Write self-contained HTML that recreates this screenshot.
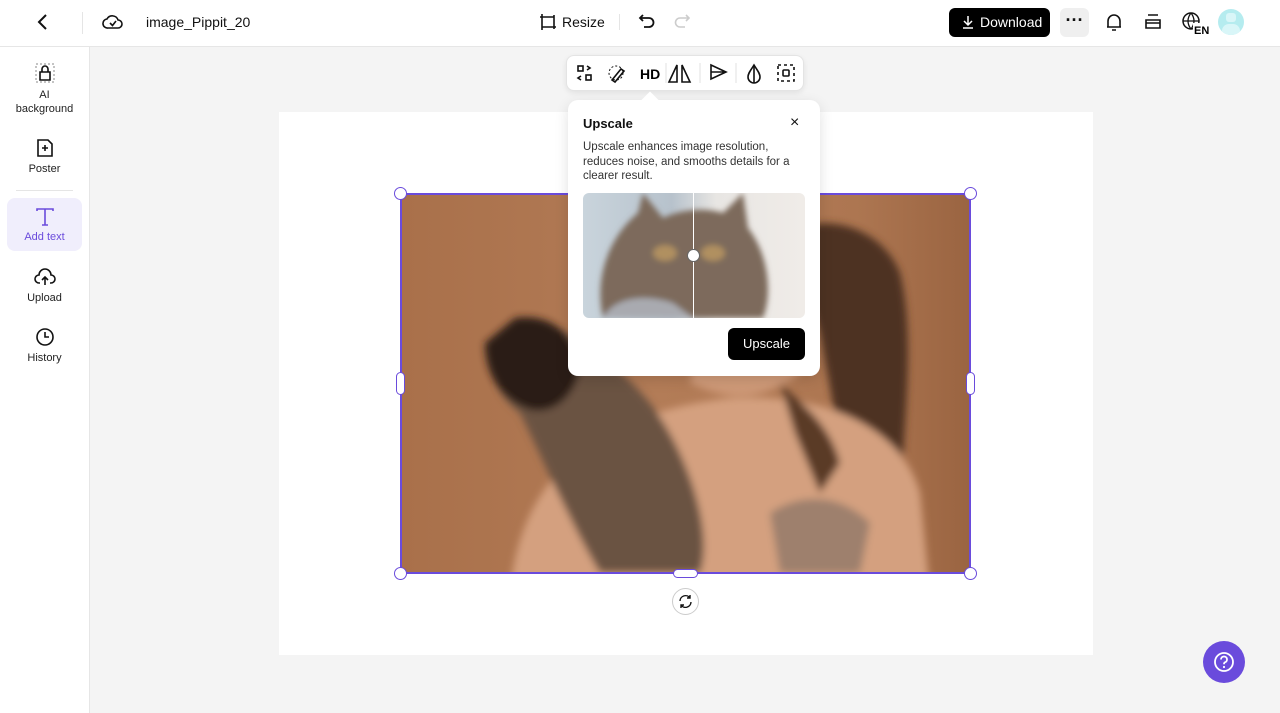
<html><head><style>
*{margin:0;padding:0;box-sizing:border-box}
body{width:1280px;height:713px;overflow:hidden;background:#f4f4f4;font-family:"Liberation Sans",sans-serif;position:relative;color:#111}
.top{position:absolute;left:0;top:0;width:1280px;height:47px;background:#fff;border-bottom:1px solid #e6e6e6}
.side{position:absolute;left:0;top:47px;width:90px;height:666px;background:#fff;border-right:1px solid #e6e6e6}
.it{position:absolute;left:7px;width:75px;text-align:center;font-size:11px;color:#222}
.ab{position:absolute}
svg{position:absolute}
</style></head><body>
<div class="top">
<svg style="left:35px;top:13px" width="16" height="18" viewBox="0 0 16 18"><path d="M11 2L4 9l7 7" fill="none" stroke="#111" stroke-width="2"/></svg>
<div class="ab" style="left:82px;top:12px;width:1px;height:22px;background:#e5e5e5"></div>
<svg style="left:102px;top:12px" width="22" height="20" viewBox="0 0 22 20"><path d="M6 16h10a4 4 0 0 0 0-8 6 6 0 0 0-11-1 4.5 4.5 0 0 0 1 9z" fill="none" stroke="#111" stroke-width="1.6"/><path d="M8 11l2.5 2.5L14 9" fill="none" stroke="#111" stroke-width="1.6"/></svg>
<div class="ab" style="left:146px;top:14px;font-size:14px">image_Pippit_20</div>
<svg style="left:539px;top:13px" width="18" height="18" viewBox="0 0 18 18"><path d="M3 1v16M1 4h14M15 2v14M3 14h14" fill="none" stroke="#111" stroke-width="1.6"/></svg>
<div class="ab" style="left:562px;top:14px;font-size:14px">Resize</div>
<div class="ab" style="left:619px;top:14px;width:1px;height:16px;background:#e5e5e5"></div>
<svg style="left:638px;top:13px" width="18" height="18" viewBox="0 0 18 18"><path d="M5 2L2 5l3 3M2 5h9a4.5 4.5 0 0 1 0 9H6" fill="none" stroke="#111" stroke-width="1.8"/></svg>
<svg style="left:673px;top:13px" width="18" height="18" viewBox="0 0 18 18"><path d="M13 2l3 3-3 3M16 5H7a4.5 4.5 0 0 0 0 9h5" fill="none" stroke="#ccc" stroke-width="1.6"/></svg>
<div class="ab" style="left:949px;top:8px;width:101px;height:29px;background:#000;border-radius:6px;color:#fff;font-size:14px;line-height:29px;padding-left:31px">Download</div>
<svg style="left:961px;top:15px" width="14" height="14" viewBox="0 0 14 14"><path d="M7 1v9M3 6l4 4 4-4M2 13h10" fill="none" stroke="#fff" stroke-width="1.5"/></svg>
<div class="ab" style="left:1060px;top:8px;width:29px;height:29px;background:#efefef;border-radius:6px;text-align:center;font-size:18px;line-height:24px;font-weight:bold">···</div>
<svg style="left:1104px;top:12px" width="20" height="20" viewBox="0 0 20 20"><path d="M4 15V9a6 6 0 0 1 12 0v6H3h14M8 18h4" fill="none" stroke="#111" stroke-width="1.6"/></svg>
<svg style="left:1143px;top:13px" width="20" height="18" viewBox="0 0 20 18"><path d="M5 2h10M3 7h14v8H3zM3 10h14" fill="none" stroke="#111" stroke-width="1.6"/></svg>
<svg style="left:1181px;top:11px" width="28" height="24" viewBox="0 0 28 24"><circle cx="10" cy="10" r="8" fill="none" stroke="#111" stroke-width="1.5"/><path d="M2 10h16M10 2c-4 5-4 11 0 16M10 2c4 5 4 11 0 16" fill="none" stroke="#111" stroke-width="1.3"/><rect x="12" y="12" width="16" height="12" fill="#fff"/><text x="13" y="23" font-size="11" font-family="Liberation Sans" font-weight="bold">EN</text></svg>
<div class="ab" style="left:1218px;top:9px;width:26px;height:26px;border-radius:50%;background:#b5ecef;overflow:hidden"><div class="ab" style="left:8px;top:4px;width:10px;height:9px;border-radius:3px;background:#d9f6f8"></div><div class="ab" style="left:4px;top:15px;width:18px;height:14px;border-radius:8px;background:#d9f6f8"></div></div>
</div>
<div class="side">
<svg style="left:35px;top:16px" width="20" height="20" viewBox="0 0 20 20"><rect x="1" y="1" width="18" height="18" fill="none" stroke="#888" stroke-width="1" stroke-dasharray="2 2"/><path d="M5 17V9h10v8zM7 9V6a3 3 0 0 1 6 0v3" fill="none" stroke="#111" stroke-width="1.6"/></svg>
<div class="it" style="top:41px;line-height:14px">AI<br>background</div>
<svg style="left:35px;top:91px" width="20" height="20" viewBox="0 0 20 20"><path d="M3 2h10l4 4v12H3z" fill="none" stroke="#111" stroke-width="1.6"/><path d="M10 7v6M7 10h6" stroke="#111" stroke-width="1.6"/></svg>
<div class="it" style="top:116px">Poster</div>
<div class="ab" style="left:16px;top:143px;width:57px;height:1px;background:#e5e5e5"></div>
<div class="ab" style="left:7px;top:151px;width:75px;height:53px;background:#f0eefc;border-radius:8px"></div>
<svg style="left:35px;top:160px" width="20" height="20" viewBox="0 0 20 20"><path d="M2 4V2h16v2M10 2v16M7 18h6" fill="none" stroke="#6a4bdc" stroke-width="1.6"/></svg>
<div class="it" style="top:184px;color:#6a4bdc">Add text</div>
<svg style="left:34px;top:220px" width="22" height="20" viewBox="0 0 22 20"><path d="M6 16H5a4 4 0 0 1 0-8 6 6 0 0 1 12 0 4 4 0 0 1 0 8h-1M11 18v-8M8 13l3-3 3 3" fill="none" stroke="#111" stroke-width="1.6"/></svg>
<div class="it" style="top:245px">Upload</div>
<svg style="left:35px;top:280px" width="20" height="20" viewBox="0 0 20 20"><circle cx="10" cy="10" r="8" fill="none" stroke="#111" stroke-width="1.6"/><path d="M10 5v5h4" fill="none" stroke="#111" stroke-width="1.6"/></svg>
<div class="it" style="top:305px">History</div>
</div>
<div class="ab" style="left:279px;top:112px;width:814px;height:543px;background:#fff"></div>
<div class="ab" style="left:400px;top:193px;width:571px;height:380px;overflow:hidden;background:linear-gradient(90deg,#a9704a 0%,#b37c57 45%,#ad7651 80%,#9a6441 100%)">
<svg style="left:0;top:0" width="571" height="380" viewBox="0 0 571 380"><defs><filter id="b"><feGaussianBlur stdDeviation="4"/></filter></defs><g filter="url(#b)">
<path d="M390 40 C420 20 480 30 500 80 C515 140 505 220 500 310 L470 330 L440 250 L420 140 Z" fill="#4e3022"/>
<path d="M110 400 C120 280 200 220 330 205 C420 200 500 230 520 300 L530 400 Z" fill="#d4a07f"/>
<path d="M290 190 C330 210 370 205 400 180 L400 130 L300 130 Z" fill="#cf9a78"/>
<path d="M380 190 C400 210 430 230 440 270 L420 300 L395 240 Z" fill="#5a3a28"/>
<path d="M95 150 C120 120 165 125 185 160 C210 165 250 200 275 250 C300 300 310 350 300 380 L200 380 C170 330 140 260 120 220 C95 200 85 175 95 150Z" fill="#6a5242"/>
<path d="M85 150 L115 125 C150 120 175 140 180 175 C175 205 150 225 125 215 C100 205 85 180 85 150Z" fill="#2a1d17"/>
<path d="M370 320 C400 300 440 300 470 330 L460 380 L380 380Z" fill="#7a6a60" opacity=".6"/>
</g></svg>
</div>
<div class="ab" style="left:400px;top:193px;width:571px;height:381px;border:2px solid #6a4bdc"></div>
<div class="ab" style="left:394px;top:187px;width:13px;height:13px;border-radius:50%;background:#fff;border:1.5px solid #6a4bdc"></div>
<div class="ab" style="left:964px;top:187px;width:13px;height:13px;border-radius:50%;background:#fff;border:1.5px solid #6a4bdc"></div>
<div class="ab" style="left:394px;top:567px;width:13px;height:13px;border-radius:50%;background:#fff;border:1.5px solid #6a4bdc"></div>
<div class="ab" style="left:964px;top:567px;width:13px;height:13px;border-radius:50%;background:#fff;border:1.5px solid #6a4bdc"></div>
<div class="ab" style="left:396px;top:372px;width:9px;height:23px;border-radius:5px;background:#fff;border:1.5px solid #6a4bdc"></div>
<div class="ab" style="left:966px;top:372px;width:9px;height:23px;border-radius:5px;background:#fff;border:1.5px solid #6a4bdc"></div>
<div class="ab" style="left:673px;top:569px;width:25px;height:9px;border-radius:5px;background:#fff;border:1.5px solid #6a4bdc"></div>
<div class="ab" style="left:672px;top:588px;width:27px;height:27px;border-radius:50%;background:#fff;border:1px solid #ccc"></div>
<svg style="left:677px;top:593px" width="17" height="17" viewBox="0 0 17 17"><path d="M3 8a5.5 5.5 0 0 1 10-3M14 9a5.5 5.5 0 0 1-10 3M13 2v3h-3M4 15v-3h3" fill="none" stroke="#111" stroke-width="1.4"/></svg>
<div class="ab" style="left:566px;top:55px;width:238px;height:36px;background:#fff;border:1px solid #e4e4e4;border-radius:8px;box-shadow:0 2px 6px rgba(0,0,0,.08)"></div>
<svg style="left:566px;top:55px" width="238" height="36" viewBox="0 0 238 36"><g fill="none" stroke="#111" stroke-width="1.6"><rect x="12" y="11" width="5" height="5"/><rect x="20" y="20" width="5" height="5"/><path d="M21 11l3 2-3 2M15 21l-3 2 3 2"/><circle cx="50" cy="18" r="7" stroke-dasharray="2 2" stroke-width="1"/><path d="M46 25l9-11 3 2-9 11z"/><path d="M111 27V10L103 27zM116 27V10l8 17z"/><path d="M145 10l15 7-15 7zM145 17h15"/><path d="M188 10c-3 5-6 8-6 12a6 6 0 0 0 12 0c0-4-3-7-6-12z"/><path d="M188 10v18" /><rect x="212" y="10" width="16" height="16" stroke-dasharray="3 3"/><rect x="217" y="15" width="6" height="6" rx="1"/><path d="M100 8v20M134 8v20M170 8v20" stroke="#e0e0e0" stroke-width="1"/></g><text x="74" y="24" font-size="14" font-weight="bold" font-family="Liberation Sans">HD</text></svg>
<div class="ab" style="left:568px;top:100px;width:252px;height:276px;background:#fff;border-radius:10px;box-shadow:0 4px 14px rgba(0,0,0,.12)"></div>
<div class="ab" style="left:644px;top:94px;width:12px;height:12px;background:#fff;transform:rotate(45deg)"></div>
<div class="ab" style="left:583px;top:116px;font-size:13px;font-weight:bold">Upscale</div>
<div class="ab" style="left:790px;top:114px;font-size:16px">×</div>
<div class="ab" style="left:583px;top:140px;width:222px;font-size:11.5px;line-height:14.5px;color:#333">Upscale enhances image resolution, reduces noise, and smooths details for a clearer result.</div>
<div class="ab" style="left:583px;top:193px;width:222px;height:125px;border-radius:6px;overflow:hidden;background:linear-gradient(90deg,#c9d4dc,#b7c2cc 40%,#e8e6e3 60%,#f0ece8)">
<svg style="left:0;top:0" width="222" height="125" viewBox="0 0 222 125"><defs><filter id="c"><feGaussianBlur stdDeviation="3"/></filter></defs><g filter="url(#c)"><path d="M20 125 C10 80 30 40 55 20 L60 0 L80 25 C100 15 125 15 140 20 L160 0 L165 35 C185 60 190 100 180 125Z" fill="#7d6a5c"/><path d="M70 60 a12 8 0 0 0 24 0 a12 8 0 0 0 -24 0M118 60 a12 8 0 0 0 24 0 a12 8 0 0 0 -24 0" fill="#b09060"/><path d="M20 125 C30 105 60 100 90 110 L110 125Z" fill="#a9aab0"/></g></svg>
<div class="ab" style="left:110px;top:0;width:1px;height:125px;background:#fff"></div>
<div class="ab" style="left:104px;top:56px;width:13px;height:13px;border-radius:50%;background:#fff;border:1px solid #666"></div>
</div>
<div class="ab" style="left:728px;top:328px;width:77px;height:32px;background:#000;border-radius:6px;color:#fff;font-size:13px;text-align:center;line-height:32px">Upscale</div>
<div class="ab" style="left:1203px;top:641px;width:42px;height:42px;border-radius:50%;background:#6a4bdc"></div>
<svg style="left:1213px;top:651px" width="22" height="22" viewBox="0 0 22 22"><circle cx="11" cy="11" r="9" fill="none" stroke="#fff" stroke-width="1.8"/><path d="M8 8.5a3 3 0 1 1 4 2.8c-1 .4-1 1-1 2" fill="none" stroke="#fff" stroke-width="1.8"/><circle cx="11" cy="16" r="1.1" fill="#fff"/></svg>
</body></html>
